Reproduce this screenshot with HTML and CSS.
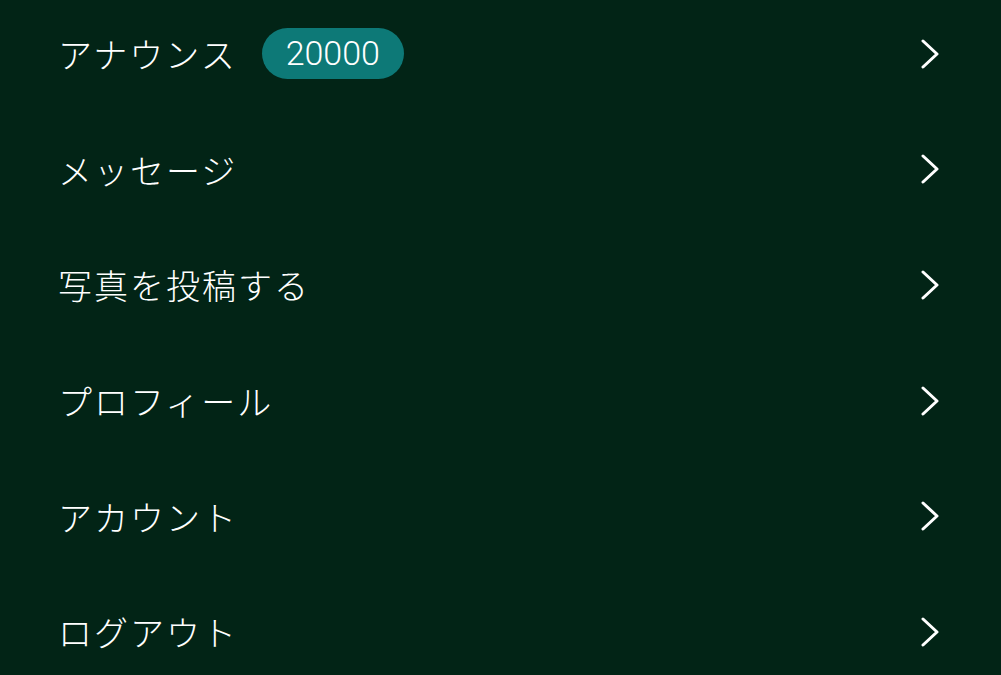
FILE: index.html
```html
<!DOCTYPE html>
<html lang="ja">
<head>
    <meta charset="UTF-8">
    <meta name="viewport" content="width=device-width, initial-scale=1.0">
    <title>メニュー</title>
    <link rel="stylesheet" href="styles.css">
</head>
<body>

    <!-- メニュー一覧 -->
    <ul class="menu">
        <li class="menu-item">
            <span class="label">アナウンス</span>
            <span class="badge">20000</span>
            <svg class="chevron" viewBox="0 0 18 30"><path d="M2 2 L16 15 L2 28"/></svg>
        </li>
        <li class="menu-item">
            <span class="label">メッセージ</span>
            <svg class="chevron" viewBox="0 0 18 30"><path d="M2 2 L16 15 L2 28"/></svg>
        </li>
        <li class="menu-item">
            <span class="label">写真を投稿する</span>
            <svg class="chevron" viewBox="0 0 18 30"><path d="M2 2 L16 15 L2 28"/></svg>
        </li>
        <li class="menu-item">
            <span class="label">プロフィール</span>
            <svg class="chevron" viewBox="0 0 18 30"><path d="M2 2 L16 15 L2 28"/></svg>
        </li>
        <li class="menu-item">
            <span class="label">アカウント</span>
            <svg class="chevron" viewBox="0 0 18 30"><path d="M2 2 L16 15 L2 28"/></svg>
        </li>
        <li class="menu-item">
            <span class="label">ログアウト</span>
            <svg class="chevron" viewBox="0 0 18 30"><path d="M2 2 L16 15 L2 28"/></svg>
        </li>
    </ul>

</body>
</html>
```

FILE: styles.css
```css
body {
    margin: 0;
    background-color: #022416;
    color: #ffffff;
    font-family: "Noto Sans CJK JP", "Noto Sans", sans-serif;
    overflow: hidden;
}

.menu {
    list-style: none;
    margin: -4px 0 0 0;
    padding: 0;
}

.menu-item {
    display: flex;
    align-items: center;
    height: 115.6px;
    padding: 0 62px 0 58px;
}

.label {
    font-size: 34px;
    font-weight: 300;
    letter-spacing: 2px;
}

.badge {
    margin-left: 25px;
    height: 51px;
    padding: 0 24px;
    border-radius: 26px;
    background-color: #0d7977;
    font-family: Roboto, "Liberation Sans", sans-serif;
    font-weight: 300;
    font-size: 34px;
    line-height: 51px;
}

.chevron {
    margin-left: auto;
    width: 18px;
    height: 30px;
    fill: none;
    stroke: #ffffff;
    stroke-width: 3;
    stroke-linecap: round;
    stroke-linejoin: round;
}
```
